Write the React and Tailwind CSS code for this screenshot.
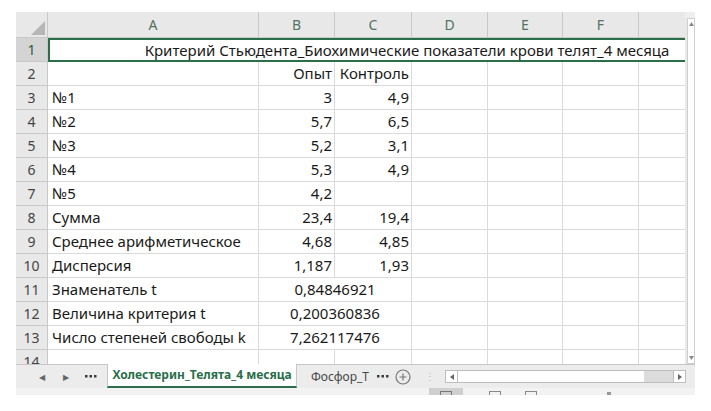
import React from "react";

const COLS = [
  { k: "A", w: 211 },
  { k: "B", w: 76 },
  { k: "C", w: 77 },
  { k: "D", w: 76 },
  { k: "E", w: 75 },
  { k: "F", w: 76 },
  { k: "", w: 60 },
];

const ROWS = [
  { n: 2, a: "", b: "Опыт", c: "Контроль" },
  { n: 3, a: "№1", b: "3", c: "4,9" },
  { n: 4, a: "№2", b: "5,7", c: "6,5" },
  { n: 5, a: "№3", b: "5,2", c: "3,1" },
  { n: 6, a: "№4", b: "5,3", c: "4,9" },
  { n: 7, a: "№5", b: "4,2", c: "" },
  { n: 8, a: "Сумма", b: "23,4", c: "19,4" },
  { n: 9, a: "Среднее арифметическое", b: "4,68", c: "4,85" },
  { n: 10, a: "Дисперсия", b: "1,187", c: "1,93" },
  { n: 11, a: "Знаменатель t", m: "0,84846921" },
  { n: 12, a: "Величина критерия t", m: "0,200360836" },
  { n: 13, a: "Число степеней свободы k", m: "7,262117476" },
];

const font = { fontFamily: '"Noto Sans", "Open Sans", sans-serif' };

function RowNum({ n, sel }) {
  return (
    <div
      className={`w-[32px] shrink-0 h-[24px] flex items-center justify-center border-r border-b border-[#c8c8c8] text-[14px] ${
        sel ? "bg-[#d4d4d4] text-[#2b5c40]" : "bg-[#e8e8e8] text-[#444]"
      }`}
    >
      {n}
    </div>
  );
}

function Cell({ w, children, align = "right", className = "" }) {
  return (
    <div
      className={`shrink-0 h-[24px] border-r border-b border-[#dadada] flex items-center px-[2px] overflow-visible whitespace-nowrap text-[15px] text-[#1a1a1a] ${
        align === "right" ? "justify-end" : align === "center" ? "justify-center" : "justify-start"
      } ${className}`}
      style={{ width: w }}
    >
      {children}
    </div>
  );
}

function Dots() {
  return (
    <svg width="12" height="3" viewBox="0 0 12 3" className="shrink-0">
      <rect x="0" y="0" width="2.5" height="2.5" fill="#3a3a3a" />
      <rect x="4.5" y="0" width="2.5" height="2.5" fill="#3a3a3a" />
      <rect x="9" y="0" width="2.5" height="2.5" fill="#3a3a3a" />
    </svg>
  );
}

export default function App() {
  return (
    <div className="w-[711px] h-[411px] bg-white overflow-hidden" style={font}>
      <div className="ml-[16px] mt-[12px] w-[679px] flex flex-col">
        {/* sheet area */}
        <div className="flex h-[352px]">
          <div className="w-[669px] overflow-hidden flex flex-col">
            {/* column header */}
            <div className="flex h-[26px] shrink-0 bg-[#e8e8e8]">
              <div className="w-[32px] shrink-0 h-[26px] border-r border-b border-[#c8c8c8] relative">
                <svg className="absolute right-[2px] bottom-[2px]" width="14" height="14" viewBox="0 0 14 14">
                  <polygon points="14,0 14,14 0,14" fill="#b6b6b6" />
                </svg>
              </div>
              {COLS.map((c, i) => (
                <div
                  key={i}
                  className="shrink-0 h-[26px] border-r border-b border-[#c8c8c8] flex items-center justify-center text-[14px] text-[#52735f]"
                  style={{ width: c.w }}
                >
                  {c.k}
                </div>
              ))}
            </div>
            {/* row 1 */}
            <div className="flex h-[24px] shrink-0">
              <RowNum n={1} sel />
              <div className="w-[718px] shrink-0 h-[24px] border-2 border-[#2a6e4a] flex items-center justify-center whitespace-nowrap text-[15px] text-[#1a1a1a]">
                Критерий Стьюдента_Биохимические показатели крови телят_4 месяца
              </div>
            </div>
            {ROWS.map((r) => (
              <div key={r.n} className="flex h-[24px] shrink-0">
                <RowNum n={r.n} />
                <Cell w={211} align="left" className="pl-[4px]">
                  {r.a}
                </Cell>
                {r.m ? (
                  <Cell w={153} align="center">
                    {r.m}
                  </Cell>
                ) : (
                  <>
                    <Cell w={76}>{r.b}</Cell>
                    <Cell w={77}>{r.c}</Cell>
                  </>
                )}
                <Cell w={76} />
                <Cell w={75} />
                <Cell w={76} />
                <Cell w={60} />
              </div>
            ))}
            {/* row 14 partial */}
            <div className="flex h-[24px] shrink-0">
              <div className="w-[32px] shrink-0 h-[24px] flex justify-center border-r border-[#c8c8c8] bg-[#e8e8e8] text-[14px] text-[#444] pt-[1px]">
                14
              </div>
              <Cell w={211} />
              <Cell w={76} />
              <Cell w={77} />
              <Cell w={76} />
              <Cell w={75} />
              <Cell w={76} />
              <Cell w={60} />
            </div>
          </div>
          {/* vertical scrollbar */}
          <div className="w-[10px] shrink-0 flex flex-col bg-[#e8e8e8]">
            <div className="h-[6px] bg-[#eeeeee]" />
            <div className="flex-1 ml-[2px] border border-[#cfcfcf] bg-white flex flex-col justify-between items-center py-[3px]">
              <svg width="5" height="4" viewBox="0 0 5 4">
                <polygon points="2.5,0 5,4 0,4" fill="#8a8a8a" />
              </svg>
              <svg width="5" height="4" viewBox="0 0 5 4">
                <polygon points="0,0 5,0 2.5,4" fill="#8a8a8a" />
              </svg>
            </div>
          </div>
        </div>
        {/* tab bar */}
        <div className="flex items-stretch h-[24px] bg-[#ececec] border-t border-[#c6c6c6] text-[13px]">
          <div className="w-[91px] shrink-0 flex items-center text-[#666]">
            <span className="ml-[23px] text-[8px]">◀</span>
            <span className="ml-[18px] text-[8px]">▶</span>
            <div className="ml-[16px] flex items-center">
              <Dots />
            </div>
          </div>
          <div className="w-[190px] shrink-0 bg-white border-x border-[#c6c6c6] border-b-2 border-b-[#2a6e4a] flex items-center justify-center font-bold text-[#2a6e4a] text-[12px] -mt-px whitespace-nowrap">
            Холестерин_Телята_4 месяца
          </div>
          <div className="w-[94px] shrink-0 flex items-center gap-[8px] pl-[14px] text-[#444] text-[12px] whitespace-nowrap">
            <span>Фосфор_T</span>
            <Dots />
          </div>
          <div className="w-[24px] shrink-0 flex items-center justify-center">
            <svg width="16" height="16" viewBox="0 0 16 16">
              <circle cx="8" cy="8" r="7" fill="none" stroke="#777" strokeWidth="1.2" />
              <path d="M8 4.5v7M4.5 8h7" stroke="#777" strokeWidth="1.2" />
            </svg>
          </div>
          <div className="w-[30px] shrink-0 flex items-center justify-center text-[#bbb] text-[10px]">⋮</div>
          <div className="flex items-center">
            <div className="flex h-[13px] w-[241px] border border-[#bdbdbd] bg-[#dcdcdc]">
              <div className="w-[12px] bg-white border-r border-[#bdbdbd] flex items-center justify-center">
                <svg width="4" height="6" viewBox="0 0 4 6">
                  <polygon points="4,0 4,6 0,3" fill="#666" />
                </svg>
              </div>
              <div className="w-[186px] bg-white" />
              <div className="flex-1" />
              <div className="w-[12px] bg-white border-l border-[#bdbdbd] flex items-center justify-center">
                <svg width="4" height="6" viewBox="0 0 4 6">
                  <polygon points="0,0 4,3 0,6" fill="#666" />
                </svg>
              </div>
            </div>
          </div>
        </div>
        {/* status bar strip */}
        <div className="h-[7px] bg-[#f2f2f2] flex items-end">
          <div className="ml-[413px] w-[34px] h-[7px] bg-[#cfcfcf] flex justify-center items-end">
            <div className="w-[12px] h-[4px] border-t border-x border-[#777]" />
          </div>
          <div className="ml-[26px] w-[12px] h-[4px] border-t border-x border-[#888]" />
          <div className="ml-[24px] w-[12px] h-[4px] border-t border-x border-[#888]" />
          <div className="ml-[70px] w-[4px] h-[3px] bg-[#999]" />
        </div>
      </div>
    </div>
  );
}
